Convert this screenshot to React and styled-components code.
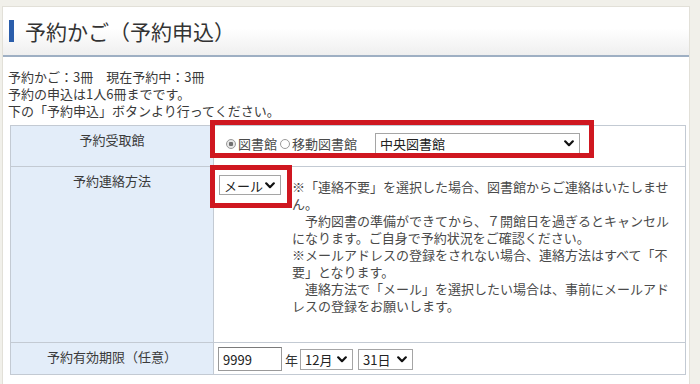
import styled, { createGlobalStyle } from 'styled-components';

const GlobalStyle = createGlobalStyle`
  html,
  body {
    margin: 0;
    padding: 0;
    background: #f1f0ea;
  }
  body {
    font-family: "Noto Sans CJK JP", "Noto Sans", sans-serif;
    font-size: 13px;
    color: #333333;
  }
`;

const Page = styled.div`
  margin: 6px 10px 0 2px;
  min-height: 380px;
  background: #ffffff;
  border: 1px solid #e2e0d8;
  border-bottom: none;
`;

const Header = styled.div`
  height: 48px;
  display: flex;
  align-items: center;
  gap: 11px;
  padding-left: 6px;
  background: linear-gradient(#ffffff 45%, #efefef);
  border-bottom: 2px solid #9eafc3;
`;

const Bar = styled.span`
  width: 5px;
  height: 22px;
  background: #2b5eab;
`;

const Title = styled.h1`
  margin: 0;
  font-size: 21px;
  font-weight: 400;
  color: #333333;
`;

const Info = styled.div`
  margin: 11px 0 0 5px;
  font-size: 13px;
  line-height: 17px;
  color: #3a3a3a;
`;

const Table = styled.table`
  margin: 6px 0 0 7px;
  width: 676px;
  border-collapse: collapse;
  table-layout: fixed;
`;

const Label = styled.th`
  width: 194px;
  padding: 5px 4px 0;
  background: #e3edf9;
  border: 1px solid #c3cad3;
  font-weight: 400;
  font-size: 13px;
  line-height: 17px;
  text-align: center;
  vertical-align: top;
  color: #3a3a3a;
`;

const Value = styled.td`
  position: relative;
  padding: ${(p) => p.$pad};
  border: 1px solid #c3cad3;
  vertical-align: top;
  background: #ffffff;
`;

const Line = styled.div`
  display: flex;
  align-items: ${(p) => (p.$top ? 'flex-start' : 'center')};
  gap: ${(p) => p.$gap || 0}px;
`;

const Radio = styled.label`
  display: inline-flex;
  align-items: center;
  margin-right: 3px;
  font-size: 13px;
  color: #4a4a4a;
  white-space: nowrap;
`;

const Dot = styled.span`
  width: 8px;
  height: 8px;
  margin-right: 2px;
  border-radius: 50%;
  border: 1px solid #9a9a9a;
  background: ${(p) =>
    p.$on ? 'radial-gradient(circle, #6f6f6f 0 35%, #e6e6e6 45%)' : '#ffffff'};
`;

const Select = styled.div`
  display: inline-flex;
  align-items: center;
  justify-content: space-between;
  flex-shrink: 0;
  box-sizing: border-box;
  width: ${(p) => p.$w}px;
  height: ${(p) => p.$h}px;
  margin-left: ${(p) => p.$ml || 0}px;
  padding: 0 5px 0 4px;
  border: 1px solid #a5a5a5;
  background: #ffffff;
  font-size: 13px;
  color: #222222;
  white-space: nowrap;
`;

const Input = styled.div`
  box-sizing: border-box;
  width: 64px;
  height: 24px;
  padding: 0 4px;
  display: flex;
  align-items: center;
  border: 1px solid #9a9a9a;
  border-top-color: #7a7a7a;
  font-size: 13px;
  color: #222222;
`;

const Unit = styled.span`
  margin: 0 2px 0 3px;
  font-size: 13px;
  color: #333333;
`;

const Note = styled.p`
  margin: 3px 0 0 0;
  font-size: 13px;
  line-height: 17px;
  color: #4a4a4a;
  white-space: nowrap;
`;

const Mark = styled.span`
  position: absolute;
  left: ${(p) => p.$x}px;
  top: ${(p) => p.$y}px;
  width: ${(p) => p.$w}px;
  height: ${(p) => p.$h}px;
  box-sizing: border-box;
  border: 5px solid #cf1720;
  pointer-events: none;
`;

function Chevron() {
  return (
    <svg width="10" height="7" viewBox="0 0 10 7">
      <path
        d="M1.2 1.3 L5 5.2 L8.8 1.3"
        fill="none"
        stroke="#111"
        strokeWidth="2.2"
        strokeLinecap="round"
        strokeLinejoin="round"
      />
    </svg>
  );
}

function Dropdown({ w, h, ml, children }) {
  return (
    <Select $w={w} $h={h} $ml={ml}>
      {children}
      <Chevron />
    </Select>
  );
}

const notes = [
  '※「連絡不要」を選択した場合、図書館からご連絡はいたしませ',
  'ん。',
  '　予約図書の準備ができてから、７開館日を過ぎるとキャンセル',
  'になります。ご自身で予約状況をご確認ください。',
  '※メールアドレスの登録をされない場合、連絡方法はすべて「不',
  '要」となります。',
  '　連絡方法で「メール」を選択したい場合は、事前にメールアド',
  'レスの登録をお願いします。',
];

export default function App() {
  return (
    <>
      <GlobalStyle />
      <Page>
        <Header>
          <Bar />
          <Title>予約かご（予約申込）</Title>
        </Header>
        <Info>
          予約かご：3冊　現在予約中：3冊
          <br />
          予約の申込は1人6冊までです。
          <br />
          下の「予約申込」ボタンより行ってください。
        </Info>
        <Table>
          <tbody>
            <tr>
              <Label>予約受取館</Label>
              <Value $pad="7px 4px 12px 12px">
                <Line>
                  <Radio>
                    <Dot $on />
                    図書館
                  </Radio>
                  <Radio>
                    <Dot />
                    移動図書館
                  </Radio>
                  <Dropdown w={205} h={21} ml={15}>
                    中央図書館
                  </Dropdown>
                </Line>
                <Mark $x={-4} $y={-6} $w={384} $h={38} />
              </Value>
            </tr>
            <tr>
              <Label>予約連絡方法</Label>
              <Value $pad="8px 4px 28px 5px">
                <Line $top $gap={11}>
                  <Dropdown w={62} h={20}>
                    メール
                  </Dropdown>
                  <Note>
                    {notes.map((t, i) => (
                      <span key={i}>
                        {t}
                        <br />
                      </span>
                    ))}
                  </Note>
                </Line>
                <Mark $x={-4} $y={-2} $w={82} $h={43} />
              </Value>
            </tr>
            <tr>
              <Label>予約有効期限（任意）</Label>
              <Value $pad="4px 4px 3px 4px">
                <Line>
                  <Input>9999</Input>
                  <Unit>年</Unit>
                  <Dropdown w={53} h={21}>
                    12月
                  </Dropdown>
                  <Dropdown w={55} h={21} ml={5}>
                    31日
                  </Dropdown>
                </Line>
              </Value>
            </tr>
          </tbody>
        </Table>
      </Page>
    </>
  );
}
